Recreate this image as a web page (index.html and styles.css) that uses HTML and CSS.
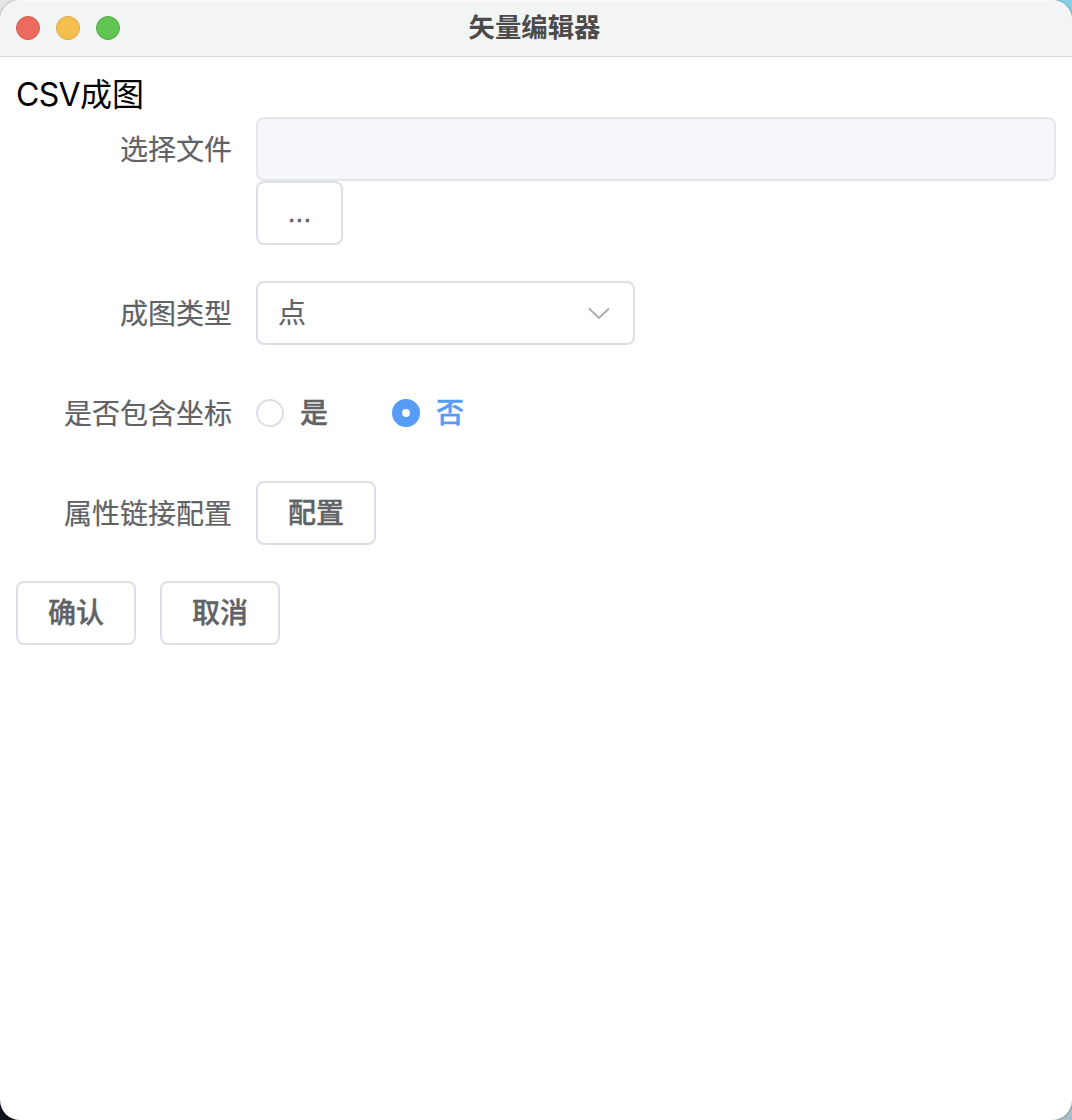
FILE: index.html
```html
<!DOCTYPE html>
<html lang="zh-CN">
<head>
<meta charset="utf-8">
<title>矢量编辑器</title>
<link rel="stylesheet" href="styles.css">
</head>
<body>
<div class="window">
  <header class="titlebar">
    <div class="lights">
      <span class="light close"></span>
      <span class="light minimize"></span>
      <span class="light zoom"></span>
    </div>
    <div class="title">矢量编辑器</div>
  </header>
  <main class="content">
    <div class="heading"><span class="latin">CSV</span>成图</div>
    <div class="row">
      <label class="label">选择文件</label>
      <div class="field stack">
        <div class="input"></div>
        <button class="button browse">...</button>
      </div>
    </div>
    <div class="row">
      <label class="label">成图类型</label>
      <div class="select">
        <span class="text">点</span>
        <svg class="chevron" width="24" height="14" viewBox="0 0 24 14"><path d="M2 2.5 L12 12 L22 2.5"/></svg>
      </div>
    </div>
    <div class="row">
      <label class="label">是否包含坐标</label>
      <div class="radios">
        <div class="radio"><span class="dot"></span><span class="text">是</span></div>
        <div class="radio checked"><span class="dot"></span><span class="text">否</span></div>
      </div>
    </div>
    <div class="row">
      <label class="label">属性链接配置</label>
      <button class="button">配置</button>
    </div>
    <div class="actions">
      <button class="button">确认</button>
      <button class="button">取消</button>
    </div>
  </main>
</div>
</body>
</html>
```
FILE: styles.css
```css
* { box-sizing: border-box; }

body {
  margin: 0;
  height: 1120px;
  overflow: hidden;
  background: conic-gradient(#8bcfe4 0 25%, #a9bec8 25% 50%, #10131b 50% 75%, #e4e4e4 75%);
  font-family: Inter, "Noto Sans CJK SC", sans-serif;
  font-size: 28px;
  color: #606266;
  -webkit-text-stroke: .2px;
}

.window {
  height: 1120px;
  overflow: hidden;
  border-radius: 20px;
  background: #fff;
  box-shadow: 0 0 2px rgba(0, 0, 0, .5);
}

.titlebar {
  display: grid;
  grid-template-columns: 1fr auto 1fr;
  align-items: center;
  height: 57px;
  padding: 0 18px 0 16px;
  border-bottom: 1px solid #d5d6d6;
  background: #f3f5f4;
  box-shadow: inset 0 1px #fbfbfb;
}

.lights { display: flex; gap: 16px; }

.light {
  width: 24px;
  height: 24px;
  border: 1px solid;
  border-radius: 50%;
}

.close { background: #ed6a5e; border-color: #d85a50; }
.minimize { background: #f5bf4f; border-color: #dba640; }
.zoom { background: #61c554; border-color: #50ae43; }

.title {
  margin-left: -1px;
  padding-bottom: 2px;
  color: #4b4b4b;
  font-size: 26.4px;
  font-weight: 700;
  line-height: 54px;
  -webkit-text-stroke: 0;
}

.content { padding: 16px 16px 0; }

.heading {
  height: 44px;
  color: #000;
  font-size: 32px;
  line-height: 44px;
  -webkit-text-stroke: 0;
}

.latin { letter-spacing: -.7px; }

.row {
  display: flex;
  margin-bottom: 36px;
}

.label {
  width: 240px;
  height: 64px;
  padding-right: 24px;
  line-height: 66px;
  text-align: right;
}

.field { flex: 1; }

.stack {
  display: flex;
  flex-direction: column;
  align-items: flex-start;
}

.input {
  width: 100%;
  height: 64px;
  border: 2px solid #e4e7ed;
  border-radius: 8px;
  background: #f5f7fa;
}

.button {
  width: 120px;
  height: 64px;
  padding: 0;
  border: 2px solid #dcdfe6;
  border-radius: 8px;
  background: #fff;
  color: inherit;
  font: inherit;
  font-weight: 500;
  line-height: 60px;
  -webkit-text-stroke: .4px;
}

.browse {
  width: 87px;
  font-family: "Liberation Sans", sans-serif;
}

.select {
  display: flex;
  align-items: center;
  justify-content: space-between;
  width: 379px;
  height: 64px;
  padding: 0 22px 0 20px;
  border: 2px solid #dcdfe6;
  border-radius: 8px;
  line-height: 60px;
}

.chevron {
  fill: none;
  stroke: #a8abb2;
  stroke-width: 1.8;
}

.radios { display: flex; gap: 64px; }

.radio {
  display: flex;
  align-items: center;
  gap: 16px;
  height: 64px;
  font-weight: 500;
  line-height: 60px;
  -webkit-text-stroke: .4px;
}

.dot {
  width: 28px;
  height: 28px;
  border: 2px solid #dcdfe6;
  border-radius: 50%;
}

.checked { color: #579df8; }

.checked .dot {
  border: 10px solid #579df8;
  background: #fff;
}

.actions { display: flex; gap: 24px; }
```
